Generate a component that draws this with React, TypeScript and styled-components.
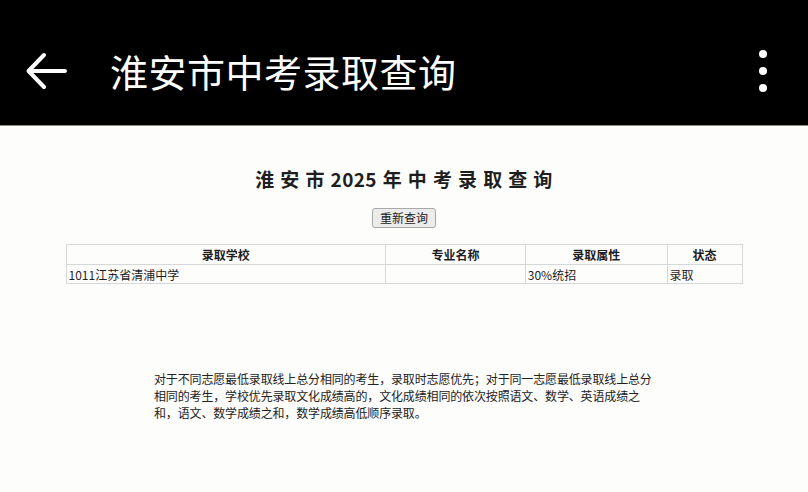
import React from "react";
import styled, { createGlobalStyle } from "styled-components";

const Global = createGlobalStyle`
  html, body { margin: 0; padding: 0; background: #fdfdfc; }
  body { font-family: "Noto Sans CJK SC", "Noto Sans", sans-serif; }
  * { box-sizing: border-box; }
`;

const Page = styled.div`
  width: 808px;
  height: 492px;
  display: flex;
  flex-direction: column;
  background: #fdfdfc;
  overflow: hidden;
`;

const AppBar = styled.header`
  height: 126px;
  flex: none;
  background: #000;
  border-bottom: 1px solid #8a8a86;
  display: flex;
  align-items: center;
  padding: 17px 0 0 24px;
  color: #fff;
`;

const BackButton = styled.div`
  width: 44px;
  height: 40px;
  display: flex;
  align-items: center;
  justify-content: center;
  flex: none;
`;

const BarTitle = styled.h1`
  margin: 0 0 0 42px;
  font-size: 38px;
  font-weight: 400;
  letter-spacing: 0.5px;
  line-height: 50px;
  flex: 1;
`;

const MoreButton = styled.div`
  width: 8px;
  margin-right: 41px;
  display: flex;
  flex-direction: column;
  gap: 9px;
`;

const Dot = styled.span`
  width: 8px;
  height: 8px;
  border-radius: 50%;
  background: #fff;
`;

const Content = styled.main`
  display: flex;
  flex-direction: column;
  align-items: center;
  padding-top: 35px;
  color: #1e1e1e;
`;

const PageTitle = styled.h2`
  margin: 0;
  font-size: 19px;
  font-weight: 700;
  letter-spacing: 0.4px;
  word-spacing: 1px;
  line-height: 36px;
  white-space: pre;
`;

const RequeryButton = styled.button`
  margin-top: 11px;
  height: 20px;
  padding: 0 7px;
  font-family: "Noto Sans CJK SC", sans-serif;
  font-size: 12px;
  line-height: 18px;
  color: #222;
  background: #ececec;
  border: 1px solid #a8a8a8;
  border-radius: 3px;
`;

const Table = styled.table`
  margin-top: 16px;
  width: 677px;
  border-collapse: collapse;
  font-size: 12px;
  border: 1px solid #d4d8d8;
`;

const Th = styled.th<{ w: number }>`
  width: ${(p) => p.w}px;
  height: 20px;
  padding: 0;
  font-weight: 700;
  text-align: center;
  border: 1px solid #d4d8d8;
  line-height: 18px;
`;

const Td = styled.td`
  height: 19px;
  padding: 0 2px;
  text-align: left;
  border: 1px solid #d4d8d8;
  line-height: 17px;
`;

const Note = styled.p`
  margin: 86px 0 0;
  width: 500px;
  font-size: 12px;
  letter-spacing: -0.15px;
  line-height: 17px;
  color: #222;
`;

const columns = [
  { name: "录取学校", w: 320 },
  { name: "专业名称", w: 140 },
  { name: "录取属性", w: 142 },
  { name: "状态", w: 75 },
];

export default function App() {
  return (
    <Page>
      <Global />
      <AppBar>
        <BackButton>
          <svg width="42" height="38" viewBox="0 0 42 38" fill="none">
            <path
              d="M40 19H4M19 3L3.5 19L19 35"
              stroke="#fff"
              strokeWidth="4"
              strokeLinecap="round"
              strokeLinejoin="round"
            />
          </svg>
        </BackButton>
        <BarTitle>淮安市中考录取查询</BarTitle>
        <MoreButton>
          <Dot />
          <Dot />
          <Dot />
        </MoreButton>
      </AppBar>
      <Content>
        <PageTitle>{"淮 安 市 2025 年 中 考 录 取 查 询"}</PageTitle>
        <RequeryButton>重新查询</RequeryButton>
        <Table>
          <thead>
            <tr>
              {columns.map((c) => (
                <Th key={c.name} w={c.w}>
                  {c.name}
                </Th>
              ))}
            </tr>
          </thead>
          <tbody>
            <tr>
              <Td>1011江苏省清浦中学</Td>
              <Td></Td>
              <Td>30%统招</Td>
              <Td>录取</Td>
            </tr>
          </tbody>
        </Table>
        <Note>
          对于不同志愿最低录取线上总分相同的考生，录取时志愿优先；对于同一志愿最低录取线上总分
          <br />
          相同的考生，学校优先录取文化成绩高的，文化成绩相同的依次按照语文、数学、英语成绩之
          <br />
          和，语文、数学成绩之和，数学成绩高低顺序录取。
        </Note>
      </Content>
    </Page>
  );
}
